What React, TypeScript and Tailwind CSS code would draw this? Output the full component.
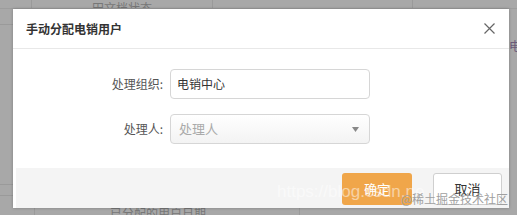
import React from "react";

const cjk = { fontFamily: '"Noto Sans CJK SC", "Noto Sans", sans-serif' };

function Background() {
  return (
    <div className="flex flex-col w-full h-full">
      {/* top strip of the dimmed table */}
      <div className="h-[9px] shrink-0 flex overflow-hidden border-b border-[#9d9d9d]">
        <div className="w-[32px] border-r border-[#9a9a9a]" />
        <div className="w-[181px] border-r border-[#9a9a9a] flex items-end justify-center">
          <span className="text-[12px] text-[#777] leading-[12px] translate-y-[6px]">田文档状态</span>
        </div>
        <div className="w-[200px] border-r border-[#9a9a9a]" />
        <div className="flex-1" />
      </div>
      {/* middle rows */}
      <div className="flex-1 flex">
        <div className="w-[13px] flex flex-col">
          <div className="h-[16px] border-b border-[#9a9a9a]" />
          <div className="h-[160px] border-b border-[#9a9a9a]" />
          <div className="h-[11px] border-b border-[#9a9a9a]" />
        </div>
        <div className="flex-1" />
        <div className="w-[8px] flex flex-col pt-[31px] overflow-hidden">
          <span className="text-[12px] text-[#6a5a7a] leading-none">电</span>
        </div>
      </div>
      {/* bottom strip */}
      <div className="h-[7px] shrink-0 flex overflow-hidden">
        <div className="w-[35px] border-r border-[#9a9a9a]" />
        <div className="w-[265px] border-r border-[#9a9a9a] pl-[75px]">
          <span className="block text-[12px] text-[#777] leading-[12px] -translate-y-[1px]">已分配的用户日期</span>
        </div>
        <div className="flex-1" />
      </div>
    </div>
  );
}

export default function App() {
  return (
    <div className="relative w-[517px] h-[215px] overflow-hidden bg-[#a8a8a8]" style={cjk}>
      <Background />

      {/* modal dialog over the dimmed page */}
      <div className="absolute left-[13px] top-[9px] w-[496px] h-[199px] bg-white flex flex-col shadow-[0_0_3px_rgba(0,0,0,0.25)]">
        <div className="h-[40px] shrink-0 border-b border-[#e8e8e8] flex items-center justify-between pl-[13px] pr-[14px]">
          <span className="text-[12px] font-bold text-[#333] leading-none">手动分配电销用户</span>
          <svg width="11" height="11" viewBox="0 0 11 11" className="text-[#666]">
            <path d="M0.5 0.5 L10.5 10.5 M10.5 0.5 L0.5 10.5" stroke="currentColor" strokeWidth="1.2" />
          </svg>
        </div>
        <div className="flex-1 flex flex-col gap-[15px] pt-[20px]">
          <div className="flex items-center gap-[7px]">
            <label className="w-[150px] text-right text-[12px] text-[#555] leading-none">处理组织:</label>
            <div className="w-[200px] h-[30px] border border-[#d6d6d6] rounded-[4px] flex items-center pl-[6px] text-[12px] text-[#333]">
              电销中心
            </div>
          </div>
          <div className="flex items-center gap-[7px]">
            <label className="w-[150px] text-right text-[12px] text-[#555] leading-none">处理人:</label>
            <div className="w-[200px] h-[30px] border border-[#d6d6d6] rounded-[4px] flex items-center justify-between pl-[8px] pr-[10px] bg-gradient-to-b from-white to-[#f3f3f3]">
              <span className="text-[13px] text-[#aaa]">处理人</span>
              <svg width="7" height="5" viewBox="0 0 7 5">
                <path d="M0 0 L7 0 L3.5 5 Z" fill="#888" />
              </svg>
            </div>
          </div>
        </div>
        <div className="h-[40px] shrink-0 ml-[3px] bg-[#f4f4f4] flex items-start justify-end gap-[21px] pt-[5px] pr-[7px]">
          <button className="w-[70px] h-[32px] rounded-[3px] bg-[#f0a64a] text-white text-[13px]">确定</button>
          <button className="w-[69px] h-[32px] rounded-[3px] bg-white border border-[#cfcfcf] text-[#333] text-[13px]">取消</button>
        </div>
      </div>

      {/* screenshot watermark overlay */}
      <div className="absolute left-[277px] top-[183px] text-[17px] text-white/50 leading-none pointer-events-none" style={{ fontFamily: '"Liberation Sans", sans-serif' }}>
        https://blog.csdn.ne
      </div>
      <div className="absolute right-[9px] bottom-[10px] text-[12px] text-[#a0a0a0] leading-none pointer-events-none">@稀土掘金技术社区</div>
    </div>
  );
}
